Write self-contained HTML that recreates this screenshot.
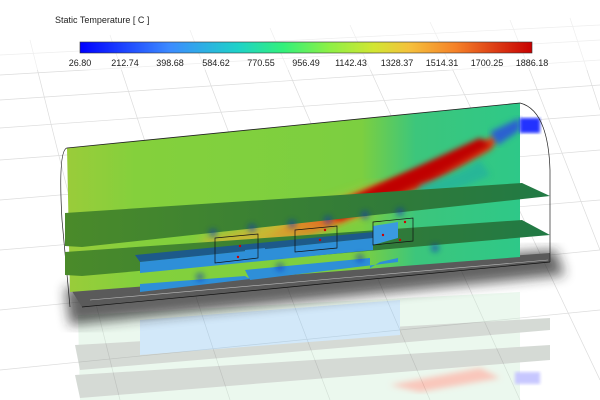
<!DOCTYPE html>
<html><head><meta charset="utf-8"><style>
html,body{margin:0;padding:0;background:#fff;width:600px;height:400px;overflow:hidden}
svg{display:block}
text{font-family:"Liberation Sans",sans-serif}
</style></head><body>
<svg width="600" height="400" viewBox="0 0 600 400" xmlns="http://www.w3.org/2000/svg">
<defs>
<linearGradient id="cb" x1="0" x2="1" y1="0" y2="0">
<stop offset="0" stop-color="#0000ff"/><stop offset="0.2" stop-color="#3c8cff"/>
<stop offset="0.35" stop-color="#1ed2c8"/><stop offset="0.45" stop-color="#32f07a"/>
<stop offset="0.55" stop-color="#8cf046"/><stop offset="0.65" stop-color="#d2e632"/>
<stop offset="0.73" stop-color="#f5c03c"/><stop offset="0.83" stop-color="#f58228"/>
<stop offset="0.92" stop-color="#dc3c14"/><stop offset="1" stop-color="#c80000"/>
</linearGradient>
<linearGradient id="wall" x1="0" x2="1" y1="0" y2="0">
<stop offset="0" stop-color="#9acc3a"/><stop offset="0.15" stop-color="#84d03c"/><stop offset="0.65" stop-color="#7ccf40"/>
<stop offset="0.77" stop-color="#3cc67c"/><stop offset="1" stop-color="#2ec888"/>
</linearGradient>
<linearGradient id="hot" x1="0" x2="1" y1="1" y2="0">
<stop offset="0" stop-color="#e8b030" stop-opacity="0"/><stop offset="0.3" stop-color="#e07020"/>
<stop offset="0.7" stop-color="#c81e08"/><stop offset="1" stop-color="#e04010"/>
</linearGradient>
<linearGradient id="pl" x1="0" x2="1" y1="0" y2="0">
<stop offset="0" stop-color="#4a8a2a"/><stop offset="0.7" stop-color="#2f7a3a"/><stop offset="1" stop-color="#217a45"/>
</linearGradient>
<filter id="bl"><feGaussianBlur stdDeviation="3"/></filter>
<filter id="bl1"><feGaussianBlur stdDeviation="1.5"/></filter>
<filter id="bl2"><feGaussianBlur stdDeviation="6"/></filter>
</defs>
<g stroke="#dcdcdc" stroke-width="0.7" fill="none">
<path d="M0 55 L600 25 M0 75 L600 40 M0 100 L600 60 M0 128 L600 85 M0 160 L600 115 M0 200 L600 150 M0 250 L600 200 M0 310 L600 250 M0 370 L600 310"/>
<path d="M30 40 L120 400 M110 35 L230 400 M190 30 L330 400 M270 28 L430 400 M350 25 L520 400 M430 22 L600 380 M510 20 L600 250 M570 18 L600 110"/>
</g>
<rect x="0" y="0" width="600" height="70" fill="#fff" opacity="0.5"/>
<text x="55" y="23" font-size="9" fill="#222">Static Temperature [ C ]</text>
<rect x="80" y="42" width="452" height="11" fill="url(#cb)" stroke="#333" stroke-width="0.6"/>
<g font-size="9" fill="#222" text-anchor="middle">
<text x="80" y="66">26.80</text><text x="125" y="66">212.74</text><text x="170" y="66">398.68</text>
<text x="216" y="66">584.62</text><text x="261" y="66">770.55</text><text x="306" y="66">956.49</text>
<text x="351" y="66">1142.43</text><text x="397" y="66">1328.37</text><text x="442" y="66">1514.31</text>
<text x="487" y="66">1700.25</text><text x="532" y="66">1886.18</text>
</g>
<!-- reflection -->
<g opacity="0.35">
<polygon points="78,315 520,292 520,400 80,400" fill="#c8ecd0"/>
<polygon points="75,345 550,318 550,330 80,370" fill="#8a968a"/>
<polygon points="75,375 550,345 550,360 80,398" fill="#8a968a"/>
<polygon points="140,320 400,300 400,335 140,355" fill="#80c0f0"/>
<path d="M390 385 L480 368 L500 378 L420 392Z" fill="#f06040" filter="url(#bl)"/>
<rect x="515" y="372" width="25" height="12" fill="#6060ff" filter="url(#bl1)"/>
</g>
<!-- shadow -->
<polygon points="65,288 555,250 565,275 70,325" fill="#222" filter="url(#bl2)" opacity="0.7"/>
<!-- floor -->
<polygon points="70,288 550,253 550,262 82,307" fill="#5a5a5a"/>
<path d="M90 300 L548 260" stroke="#bbb" stroke-width="0.6"/>
<!-- back wall -->
<polygon points="67,148 520,103 520,257 70,292" fill="url(#wall)"/>
<path d="M200 240 Q300 215 380 185 L400 195 Q320 235 210 255Z" fill="#e0b030" filter="url(#bl2)" opacity="0.8"/>
<path d="M250 245 Q330 200 420 170 Q470 150 495 135 Q500 140 490 150 Q430 185 360 215 Q290 245 250 258Z" fill="url(#hot)" filter="url(#bl)"/>
<path d="M320 212 Q400 175 480 138 L490 145 Q410 190 340 220Z" fill="#c00000" filter="url(#bl)"/>
<path d="M490 132 L520 118 L520 130 L498 145Z" fill="#2a60d0" filter="url(#bl)"/>
<path d="M420 185 Q460 175 480 160 L490 175 Q450 195 420 195Z" fill="#20b0a0" filter="url(#bl)" opacity="0.7"/>
<rect x="520" y="118" width="20" height="15" fill="#2030ff" filter="url(#bl1)"/>
<path d="M67 148 L520 103" stroke="#222" stroke-width="0.8"/>
<path d="M67 148 Q58 150 62 220 L70 307" stroke="#222" stroke-width="0.7" fill="none"/>
<path d="M520 103 Q548 110 550 170 L550 262" stroke="#222" stroke-width="0.7" fill="none"/>
<!-- planes -->
<polygon points="65,213 522,183 550,196 82,247 65,246" fill="url(#pl)"/>
<polygon points="65,252 522,220 550,235 82,276 65,275" fill="url(#pl)"/>
<!-- blue blocks -->
<polygon points="135,255 373,232 373,238 140,262" fill="#1d5a8a"/>
<polygon points="140,262 373,238 373,250 140,273" fill="#2e8fd8"/>
<polygon points="373,226 398,222 398,238 373,245" fill="#3a9ae0"/>
<polygon points="140,284 245,276 250,279 140,292" fill="#2e8fd8"/>
<polygon points="245,270 370,258 370,268 380,262 398,258 398,262 250,280" fill="#2e8fd8"/>
<polygon points="245,250 265,248 265,258 245,260" fill="#2e8fd8"/>
<g stroke="#111" stroke-width="0.7" fill="none">
<polygon points="215,238 258,234 258,258 215,263"/>
<polygon points="295,230 337,226 337,248 295,252"/>
<polygon points="373,222 413,218 413,241 373,245"/>
<path d="M82 307 L550 262"/>
</g>
<g fill="#1030c0" filter="url(#bl)" opacity="0.6">
<circle cx="213" cy="233" r="4"/><circle cx="252" cy="228" r="4"/><circle cx="292" cy="224" r="4"/>
<circle cx="328" cy="220" r="4"/><circle cx="365" cy="215" r="4"/><circle cx="400" cy="212" r="4"/>
<circle cx="200" cy="277" r="4"/><circle cx="280" cy="267" r="4"/><circle cx="360" cy="258" r="4"/><circle cx="435" cy="248" r="4"/>
</g>
<g fill="#d00000">
<circle cx="240" cy="246" r="1.2"/><circle cx="320" cy="240" r="1.2"/><circle cx="325" cy="230" r="1.2"/>
<circle cx="383" cy="235" r="1.2"/><circle cx="400" cy="240" r="1.2"/><circle cx="238" cy="257" r="1.2"/><circle cx="405" cy="222" r="1.2"/>
</g>
</svg>
</body></html>
